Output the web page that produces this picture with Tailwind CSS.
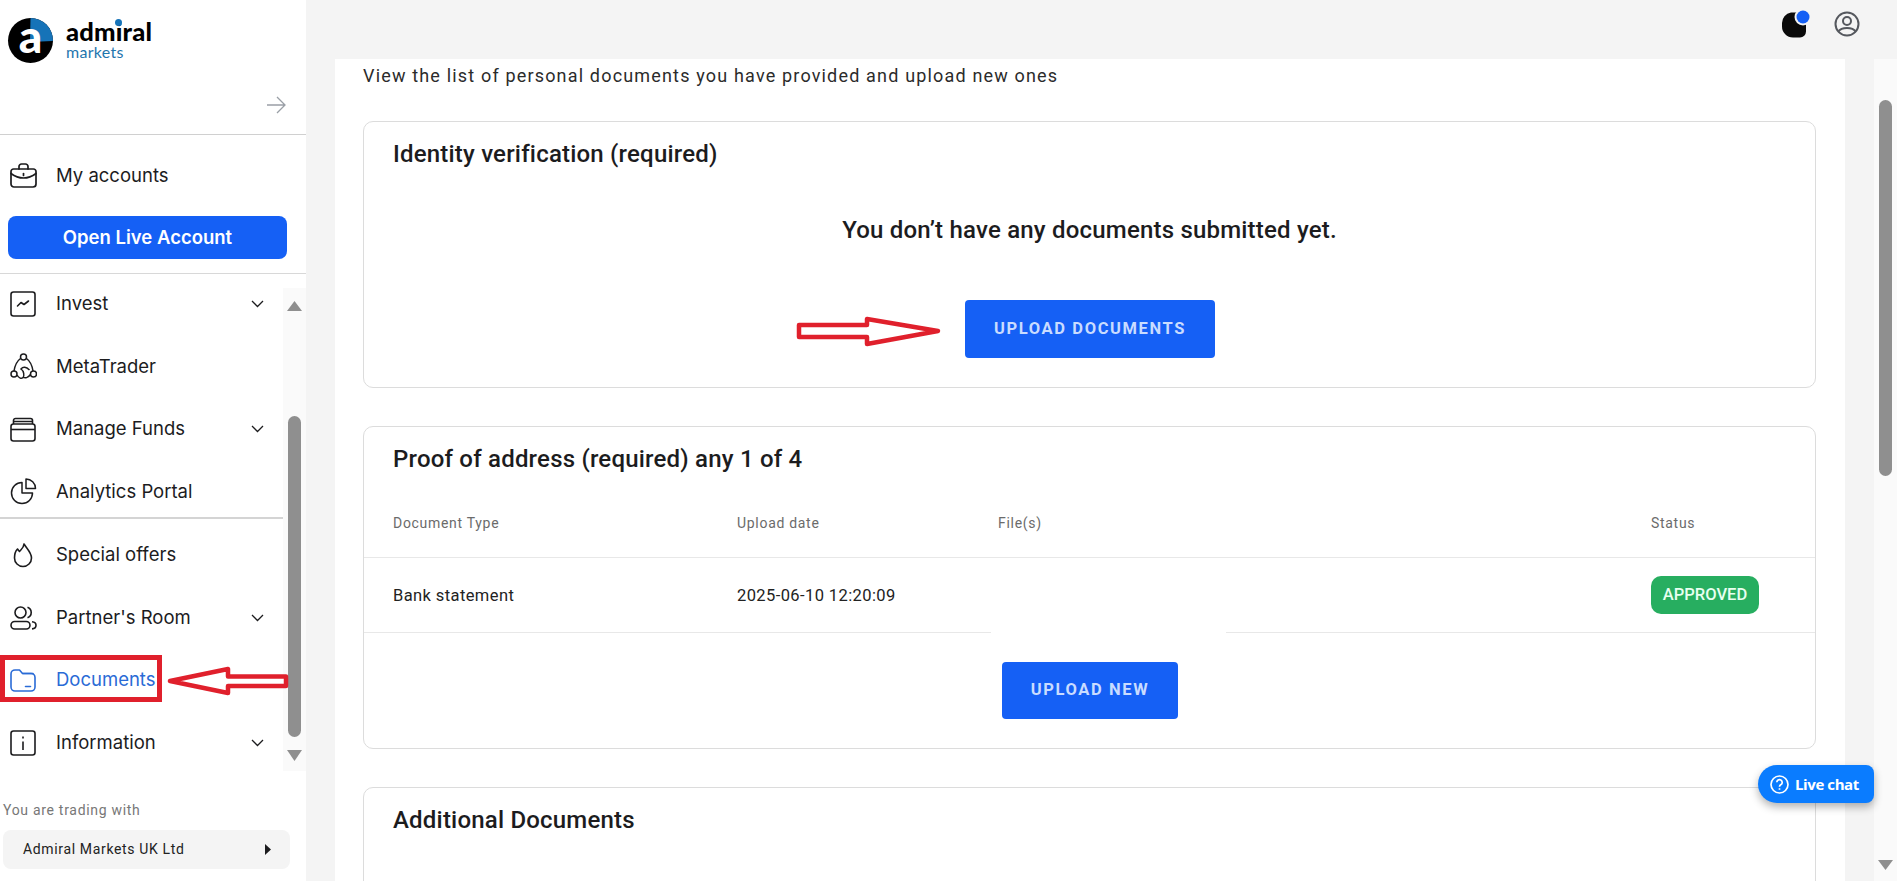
<!DOCTYPE html>
<html lang="en">
<head>
    <meta charset="UTF-8">
    <meta name="viewport" content="width=device-width, initial-scale=1.0">
    <title>Documents - Admiral Markets</title>
    <script src="https://cdn.jsdelivr.net/npm/@tailwindcss/browser@4"></script>
</head>
<body class="relative h-screen overflow-hidden bg-[#f4f4f4] font-['Roboto',sans-serif] text-[#1c1c1e]">
    <div class="flex h-full">
        <!-- Sidebar -->
        <aside class="w-[306px] h-full shrink-0 bg-white flex flex-col">
            <div class="h-[135px] shrink-0 border-b border-[#d0d0d0] relative">
                <div class="flex items-center pl-2 pt-[18px]">
                    <svg class="w-[45px] h-[45px] overflow-visible" viewBox="0 0 45 45">
                        <circle cx="22.5" cy="22.5" r="22.5" fill="#000"></circle>
                        <path d="M22.5 0A22.5 22.5 0 0 1 45 22.5L44.5 23L22 24Z" fill="#1673b8"></path>
                        <text x="22.5" y="35" text-anchor="middle" font-family="Lato, sans-serif" font-weight="900" font-size="46" fill="#fff">a</text>
                    </svg>
                    <div class="ml-[13px] -mt-[2px] relative">
                        <div class="font-['Lato',sans-serif] font-black text-[25.5px] leading-[24px] text-black tracking-[0.2px]">admiral</div>
                        <div class="font-['Lato',sans-serif] text-[16px] leading-[17px] text-[#1f76ae] tracking-[0.3px]">markets</div>
                    </div>
                </div>
                <!-- blue dot of the "i" in the wordmark -->
                <div class="absolute left-[115px] top-[18.5px] w-[7px] h-[7px] rounded-full bg-[#1673b8]"></div>
                <svg class="absolute left-[267px] top-[96px] w-[19px] h-[18px]" viewBox="0 0 19 18" fill="none" stroke="#9a9fa6" stroke-width="1.3">
                    <path d="M0 9H18M10 1l8 8-8 8"></path>
                </svg>
            </div>
            <div class="h-[139px] shrink-0 border-b border-[#d8d8d8] flex flex-col">
                <div class="h-[82px] flex items-center pl-[10px] shrink-0">
                    <svg class="w-[27px] h-[25px] -mt-[1px]" viewBox="0 0 27 25" fill="none" stroke="#1c1c1e" stroke-width="1.7" stroke-linejoin="round" stroke-linecap="round">
                        <path d="M9 6V3.500A2.500 2.500 0 0 1 11.500 1h4A2.500 2.500 0 0 1 18 3.500V6"></path>
                        <path d="M3.500 6h20A2.500 2.500 0 0 1 26 8.500V21a3 3 0 0 1-3 3H4a3 3 0 0 1-3-3V8.500A2.500 2.500 0 0 1 3.500 6Z"></path>
                        <path d="M1 10.500c4 3 8 4.500 12.500 4.500S22 13.500 26 10.500"></path>
                        <path d="M13.500 10.500v2"></path>
                    </svg>
                    <span class="ml-[19px] font-['Inter',sans-serif] text-[18.5px]">My accounts</span>
                </div>
                <button class="mx-2 -mt-[1px] w-[279px] h-[43px] rounded-lg bg-[#1560f5] text-white font-['Inter',sans-serif] font-semibold text-[18.5px]">Open Live Account</button>
            </div>

            <div class="flex -mt-[1px] h-[498px] shrink-0">
                <nav class="w-[283px] pt-[5px] font-['Inter',sans-serif] text-[18.5px]">
                    <div class="flex flex-col gap-[10.5px]">
                        <a class="h-[52px] flex items-center pl-[10px]">
                            <svg class="w-[26px] h-[26px]" viewBox="0 0 26 26" fill="none" stroke="#1c1c1e" stroke-width="1.6" stroke-linejoin="round" stroke-linecap="round">
                                <rect x="1" y="1" width="24" height="24" rx="2.500"></rect>
                                <path d="M7.500 15l3.500-3.500 3 2L18.500 10"></path>
                            </svg>
                            <span class="ml-[20px] flex-1">Invest</span>
                            <svg class="w-[13px] h-[8px] mr-[19px]" viewBox="0 0 13 8" fill="none" stroke="#1c1c1e" stroke-width="1.300"><path d="M1 1l5.500 5.500L12 1"></path></svg>
                        </a>
                        <a class="h-[52px] flex items-center pl-[10px]">
                            <svg class="w-[27px] h-[27px]" viewBox="0 0 27 27" fill="none" stroke="#1c1c1e" stroke-width="1.500">
                                <circle cx="13.500" cy="4" r="3"></circle>
                                <circle cx="4" cy="21" r="3"></circle>
                                <circle cx="23.500" cy="21" r="3"></circle>
                                <path d="M10.500 5.500C7 8 5 12 4 18M16.500 5.500c3.500 2.500 5.500 6 6.500 12.500M7 22c2 3.500 4.500 4 6 2.500s1-6.500-2-8.500c2-2.500 5-2.500 8.500 1M13 24c2 1.500 5 1 7.500-2.500"></path>
                            </svg>
                            <span class="ml-[19px]">MetaTrader</span>
                        </a>
                        <a class="h-[52px] flex items-center pl-[10px]">
                            <svg class="w-[26px] h-[25px]" viewBox="0 0 26 25" fill="none" stroke="#1c1c1e" stroke-width="1.600" stroke-linejoin="round">
                                <rect x="1" y="7" width="24" height="17" rx="2.500"></rect>
                                <path d="M1 12.500H25"></path>
                                <path d="M3.500 7V3.500A2 2 0 0 1 5.500 1.500h15a2 2 0 0 1 2 2V7M3.500 4.500h19"></path>
                            </svg>
                            <span class="ml-[20px] flex-1">Manage Funds</span>
                            <svg class="w-[13px] h-[8px] mr-[19px]" viewBox="0 0 13 8" fill="none" stroke="#1c1c1e" stroke-width="1.300"><path d="M1 1l5.500 5.500L12 1"></path></svg>
                        </a>
                        <a class="h-[52px] flex items-center pl-[10px]">
                            <svg class="w-[27px] h-[27px]" viewBox="0 0 27 27" fill="none" stroke="#1c1c1e" stroke-width="1.500" stroke-linejoin="round">
                                <path d="M12 4.500A10.500 10.500 0 1 0 22.500 15H12Z"></path>
                                <path d="M16 1a9.500 9.500 0 0 1 9.500 9.500H16Z"></path>
                            </svg>
                            <span class="ml-[19px]">Analytics Portal</span>
                        </a>
                    </div>
                    <div class="h-[2px] bg-[#d4d4d4] -mt-[0.5px] mb-[10px]"></div>
                    <div class="flex flex-col gap-[10.5px]">
                        <a class="h-[52px] flex items-center pl-[13px]">
                            <svg class="w-[20px] h-[25px]" viewBox="0 0 20 25" fill="none" stroke="#1c1c1e" stroke-width="1.600" stroke-linejoin="round">
                                <path d="M11 1c-.3 4-3 5.500-4.500 7.500C5.500 7.500 5 6.800 4.500 6 2.500 8 1.500 11 1.500 15a8.500 8.500 0 0 0 17 0C18.500 9.500 14 6 11 1Z"></path>
                            </svg>
                            <span class="ml-[23px]">Special offers</span>
                        </a>
                        <a class="h-[52px] flex items-center pl-[10px]">
                            <svg class="w-[27px] h-[24px]" viewBox="0 0 27 24" fill="none" stroke="#1c1c1e" stroke-width="1.600">
                                <circle cx="10.500" cy="6.500" r="5.500"></circle>
                                <rect x="1" y="15.500" width="19" height="7.500" rx="3.700"></rect>
                                <path d="M17.500 1.300a5.500 5.500 0 0 1 0 10.400M22 15.800c2.500.3 4 1.800 4 3.400 0 1.900-1.500 3.500-4 3.700"></path>
                            </svg>
                            <span class="ml-[19px] flex-1">Partner's Room</span>
                            <svg class="w-[13px] h-[8px] mr-[19px]" viewBox="0 0 13 8" fill="none" stroke="#1c1c1e" stroke-width="1.300"><path d="M1 1l5.500 5.500L12 1"></path></svg>
                        </a>
                        <a class="h-[52px] flex items-center pl-[10px] text-[#2a6bd6]">
                            <svg class="w-[26px] h-[23px]" viewBox="0 0 26 23" fill="none" stroke="#2a6bd6" stroke-width="1.600" stroke-linejoin="round" stroke-linecap="round">
                                <path d="M1 5a4 4 0 0 1 4-4h4.500l3 3.500H21a4 4 0 0 1 4 4V18a4 4 0 0 1-4 4H5a4 4 0 0 1-4-4Z"></path>
                                <path d="M13 4.500h10M15.500 17.500h5"></path>
                            </svg>
                            <span class="ml-[20px]">Documents</span>
                        </a>
                        <a class="h-[52px] flex items-center pl-[10px]">
                            <svg class="w-[26px] h-[26px]" viewBox="0 0 26 26" fill="none" stroke="#1c1c1e" stroke-width="1.600">
                                <rect x="1" y="1" width="24" height="24" rx="2.500"></rect>
                                <path d="M13 11.500V20M13 6.500V8.500"></path>
                            </svg>
                            <span class="ml-[20px] flex-1">Information</span>
                            <svg class="w-[13px] h-[8px] mr-[19px]" viewBox="0 0 13 8" fill="none" stroke="#1c1c1e" stroke-width="1.300"><path d="M1 1l5.500 5.500L12 1"></path></svg>
                        </a>
                    </div>
                </nav>
                <div class="w-[23px] mt-[15px] h-[483px] bg-[#fafafa] flex flex-col items-center pt-[13px]">
                    <svg class="w-[15px] h-[10px] shrink-0" viewBox="0 0 15 10"><path d="M7.500 0L15 10H0Z" fill="#8f8f8f"></path></svg>
                    <div class="w-[13px] h-[321px] mt-[105px] shrink-0 rounded-full bg-[#8f8f8f]"></div>
                    <svg class="w-[15px] h-[11px] mt-[13px] shrink-0" viewBox="0 0 15 11"><path d="M0 0H15L7.500 11Z" fill="#8f8f8f"></path></svg>
                </div>
            </div>

            <div class="pt-[31px] pl-[3px] text-[14px] leading-[16px] text-[#777] tracking-[0.7px]">You are trading with</div>
            <div class="ml-[3px] mt-[12px] w-[287px] h-[39px] rounded-lg bg-[#f4f4f4] flex items-center pl-[20px] text-[14px] text-[#222] tracking-[0.65px]">
                <span class="flex-1">Admiral Markets UK Ltd</span>
                <svg class="w-[6px] h-[11px] mr-[19px]" viewBox="0 0 6 11"><path d="M0 0L6 5.500L0 11Z" fill="#1c1c1e"></path></svg>
            </div>
        </aside>

        <!-- Main column -->
        <div class="flex-1 flex flex-col min-w-0">
            <header class="h-[59px] shrink-0 flex items-start relative">
                <svg class="absolute left-[1476px] top-[9px] w-[32px] h-[32px]" viewBox="0 0 32 32">
                    <path d="M9 4h11a5 5 0 0 1 4 4v15a6 6 0 0 1-6 6h-7a11 11 0 0 1-11-11v-3a11 11 0 0 1 9-11Z" fill="#0a0a0a" transform="translate(0 -0.500)"></path>
                    <circle cx="21" cy="8" r="8.500" fill="#f4f4f4"></circle>
                    <circle cx="21" cy="8" r="6.500" fill="#1560f5"></circle>
                </svg>
                <svg class="absolute left-[1528px] top-[11px] w-[26px] h-[26px]" viewBox="0 0 26 26" fill="none" stroke="#55585e" stroke-width="2">
                    <circle cx="13" cy="13" r="11.500"></circle>
                    <circle cx="13" cy="10" r="4"></circle>
                    <path d="M4.500 20.500c1.500-2.500 5-3.500 8.500-3.500s7 1 8.500 3.500"></path>
                </svg>
            </header>
            <div class="flex flex-1 min-h-0">
                <main class="ml-[29px] w-[1510px] bg-white pl-[28px] pr-[29px] overflow-hidden">
                    <p class="mt-[7px] h-[20px] leading-[20px] text-[18px] tracking-[1.17px] text-[#2b2b2b]">View the list of personal documents you have provided and upload new ones</p>

                    <section class="mt-[35px] h-[267px] border border-[#dcdcdc] rounded-[10px]">
                        <h2 class="pl-[29px] mt-[17px] h-[30px] leading-[30px] text-[24px] font-medium tracking-[0.2px]">Identity verification (required)</h2>
                        <p class="mt-[46px] h-[30px] leading-[30px] text-center text-[24px] font-medium tracking-[0.2px]">You don’t have any documents submitted yet.</p>
                        <div class="mt-[55px] flex justify-center pl-[1px]">
                            <button class="w-[250px] h-[58px] rounded bg-[#1560f5] text-[#c9dcff] text-[16.5px] font-bold tracking-[1.6px]">UPLOAD DOCUMENTS</button>
                        </div>
                    </section>

                    <section class="mt-[38px] h-[323px] border border-[#dcdcdc] rounded-[10px] relative">
                        <h2 class="pl-[29px] mt-[17px] h-[30px] leading-[30px] text-[24px] font-medium tracking-[0.2px]">Proof of address (required) any 1 of 4</h2>
                        <div class="flex mt-[41px] h-[43px] border-b border-[#e8e8e8] pl-[29px] text-[14px] text-[#6b6b6b] tracking-[0.7px]">
                            <span class="w-[344px] leading-[16px]">Document Type</span>
                            <span class="w-[261px] leading-[16px]">Upload date</span>
                            <span class="w-[653px] leading-[16px]">File(s)</span>
                            <span class="leading-[16px]">Status</span>
                        </div>
                        <div class="flex items-center h-[75px] border-b border-[#e8e8e8] pl-[29px] text-[16.5px] text-[#222] tracking-[0.4px]">
                            <span class="w-[344px] pt-[2px]">Bank statement</span>
                            <span class="w-[914px] pt-[2px]">2025-06-10 12:20:09</span>
                            <span class="w-[108px] h-[38px] rounded-[10px] bg-[#27ae60] text-[#e8fff0] text-[16.5px] font-medium flex items-center justify-center tracking-normal">APPROVED</span>
                        </div>
                        <div class="absolute left-[627px] top-[205px] w-[235px] h-[3px] bg-white"></div>
                        <div class="mt-[29px] flex pl-[638px]">
                            <button class="w-[176px] h-[57px] rounded bg-[#1560f5] text-[#c9dcff] text-[16.5px] font-bold tracking-[1.6px]">UPLOAD NEW</button>
                        </div>
                    </section>

                    <section class="mt-[38px] h-[200px] border border-[#dcdcdc] rounded-[10px]">
                        <h2 class="pl-[29px] mt-[17px] h-[30px] leading-[30px] text-[24px] font-medium tracking-[0.2px]">Additional Documents</h2>
                    </section>
                </main>
                <div class="ml-[29px] w-[23px] bg-[#fafafa] flex flex-col items-center pt-[41px]">
                    <div class="w-[13px] h-[376px] rounded-full bg-[#8f8f8f]"></div>
                    <svg class="w-[15px] h-[10px] mt-[384px]" viewBox="0 0 15 10"><path d="M0 0H15L7.500 10Z" fill="#8f8f8f"></path></svg>
                </div>
            </div>
        </div>
    </div>

    <!-- Live chat bubble -->
    <button class="absolute left-[1758px] top-[765px] w-[116px] h-[38px] rounded-l-[19px] rounded-r-[8px] bg-[#0a7cff] text-white shadow-[0_4px_8px_rgba(0,0,0,0.3)] flex items-center pl-[12px] font-['Open_Sans',sans-serif] font-bold text-[15px] tracking-[-0.4px]">
        <svg class="w-[19px] h-[19px] mr-[6px]" viewBox="0 0 19 19" fill="none" stroke="#fff" stroke-width="1.700">
            <circle cx="9.500" cy="9.500" r="8.500"></circle>
            <path d="M6.800 7.300a2.700 2.700 0 1 1 4.200 2.300c-1 .6-1.500 1.100-1.500 2.200M9.500 13.300v1.500"></path>
        </svg>
        Live chat
    </button>

    <!-- Red annotations drawn over the screenshot -->
    <div class="absolute left-0 top-[655px] w-[162px] h-[47px] border-[5px] border-[#e0202c]"></div>
    <svg class="absolute left-[166px] top-[664px] w-[124px] h-[34px]" viewBox="0 0 124 34" fill="#fff" stroke="#e0202c" stroke-width="4.500" stroke-linejoin="round">
        <path d="M4 17L62 5V12.500H120V22H62V29Z"></path>
    </svg>
    <svg class="absolute left-[794px] top-[313px] w-[148px] h-[36px]" viewBox="0 0 148 36" fill="#fff" stroke="#e0202c" stroke-width="4.500" stroke-linejoin="round">
        <path d="M144 18L73 6V12H5V24H73V31Z"></path>
    </svg>
</body>
</html>
